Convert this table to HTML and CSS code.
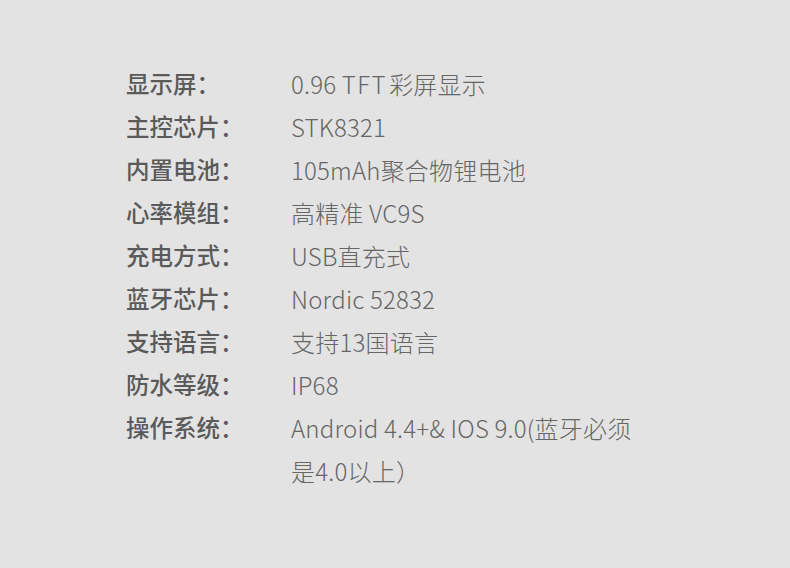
FILE: index.html
```html
<!DOCTYPE html>
<html lang="zh-CN">
<head>
  <meta charset="UTF-8" />
  <title>产品参数</title>
  <link rel="stylesheet" href="styles.css">
</head>
<body>
  <dl class="specs">
    <div class="row"><dt>显示屏：</dt><dd>0.96 <span class="wide">TFT</span>彩屏显示</dd></div>
    <div class="row"><dt>主控芯片：</dt><dd>STK8321</dd></div>
    <div class="row"><dt>内置电池：</dt><dd>105mAh聚合物锂电池</dd></div>
    <div class="row"><dt>心率模组：</dt><dd>高精准 VC9S</dd></div>
    <div class="row"><dt>充电方式：</dt><dd>USB直充式</dd></div>
    <div class="row"><dt>蓝牙芯片：</dt><dd>Nordic 52832</dd></div>
    <div class="row"><dt>支持语言：</dt><dd>支持13国语言</dd></div>
    <div class="row"><dt>防水等级：</dt><dd>IP68</dd></div>
    <div class="row"><dt>操作系统：</dt><dd>Android 4.4+&amp; IOS 9.0(蓝牙必须是4.0以上）</dd></div>
  </dl>
</body>
</html>
```

FILE: styles.css
```css
* {
  box-sizing: border-box;
  margin: 0;
  padding: 0;
}

body {
  width: 790px;
  height: 568px;
  background: #e3e3e3;
  font-family: "Noto Sans CJK SC", "Noto Sans", sans-serif;
  color: #555;
  overflow: hidden;
}

.specs {
  padding: 62px 0 0 126px;
}

.row {
  display: flex;
  line-height: 43px;
}

dt {
  width: 165px;
  flex: none;
  font-size: 23.5px;
  font-weight: 500;
  color: #5a5a5a;
}

dd {
  width: 352px;
  font-size: 24px;
  font-weight: 300;
  letter-spacing: 0.2px;
  color: #666;
}

dd .wide {
  letter-spacing: 1.5px;
  margin-right: 2px;
}
```
